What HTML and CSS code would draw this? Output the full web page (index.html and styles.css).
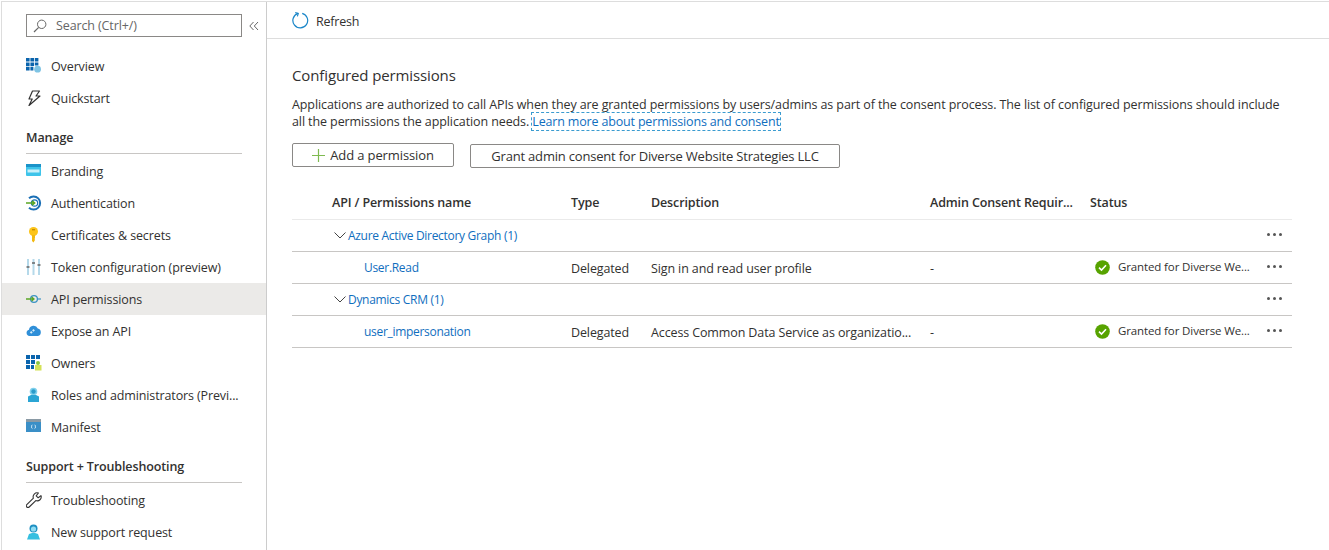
FILE: index.html
```html
<!DOCTYPE html>
<html lang="en">
<head>
  <meta charset="UTF-8" />
  <title>API permissions</title>
  <link rel="stylesheet" href="styles.css">
</head>
<body>
  <div class="app">
    <aside class="sidebar">
      <div class="search-row">
        <div class="search-box">
          <svg class="search-icon" width="14" height="14" viewBox="0 0 14 14"><circle cx="8.7" cy="5.3" r="4.2" fill="none" stroke="#666" stroke-width="1"/><path d="M5.7 8.3 L1 13" stroke="#666" stroke-width="1.2"/></svg>
          <span>Search (Ctrl+/)</span>
        </div>
        <svg class="collapse-icon" width="10" height="10" viewBox="0 0 10 10"><path d="M4.5 1 L0.8 5 L4.5 9 M9 1 L5.3 5 L9 9" fill="none" stroke="#666" stroke-width="1"/></svg>
      </div>

      <a class="nav-item first">
        <svg width="16" height="16" viewBox="0 0 16 16"><path d="M0 0h3.6v3.6H0zM4.4 0h3.6v3.6H4.4zM8.8 0h3.6v3.6H8.8zM0 4.4h3.6v3.6H0zM4.4 4.4h3.6v3.6H4.4zM8.8 4.4h3.6v3H8.8zM0 8.8h3.6v3.6H0zM4.4 8.8h3v3.6h-3z" fill="#0a64ad"/><circle cx="11.6" cy="11.2" r="3.4" fill="#7fc4e4"/></svg>
        <span>Overview</span>
      </a>
      <a class="nav-item">
        <svg width="16" height="16" viewBox="0 0 16 16"><path d="M6.5 1 H13.5 L10 6 H14 L3 15.5 L6.2 9 H3 Z" fill="none" stroke="#333" stroke-width="1.2" stroke-linejoin="round"/></svg>
        <span>Quickstart</span>
      </a>

      <div class="nav-heading manage">Manage</div>
      <a class="nav-item">
        <svg width="16" height="16" viewBox="0 0 16 16"><rect x="0" y="1" width="15" height="12" rx="1" fill="#3ec4ea"/><rect x="0" y="1" width="15" height="3" fill="#1b93c9"/><rect x="1.5" y="6.5" width="12" height="3" fill="#c8f0fa"/></svg>
        <span>Branding</span>
      </a>
      <a class="nav-item">
        <svg width="16" height="16" viewBox="0 0 16 16"><path d="M3 3.2 A6.6 6.6 0 1 1 3 12.8" fill="none" stroke="#1a6fb5" stroke-width="2"/><circle cx="8.5" cy="8" r="3.2" fill="none" stroke="#1a6fb5" stroke-width="1.2"/><path d="M0 8 H8 M6 5.8 L8.6 8 L6 10.2" fill="none" stroke="#5aa625" stroke-width="1.6"/></svg>
        <span>Authentication</span>
      </a>
      <a class="nav-item">
        <svg width="16" height="16" viewBox="0 0 16 16"><circle cx="7.5" cy="4.5" r="4.5" fill="#fcc419"/><path d="M6 8 H9 V11 L8.6 12 L9 13 L7.5 15.5 L6 14 Z" fill="#f2b90f"/><rect x="6" y="2" width="3" height="1.4" fill="#c98f00"/></svg>
        <span>Certificates &amp; secrets</span>
      </a>
      <a class="nav-item">
        <svg width="16" height="16" viewBox="0 0 16 16"><path d="M2 0v16M7.5 0v16M13 0v16" stroke="#b5d9ea" stroke-width="2"/><path d="M0.5 8h3M6 4h3M11.5 6h3" stroke="#666" stroke-width="1.4"/></svg>
        <span>Token configuration (preview)</span>
      </a>
      <a class="nav-item active">
        <svg width="16" height="16" viewBox="0 0 16 16"><circle cx="8" cy="8" r="3.4" fill="none" stroke="#3a93c4" stroke-width="1.3"/><path d="M11.4 8 H15" stroke="#3a93c4" stroke-width="1.2"/><path d="M0 8 H7.5 M5.6 6 L8 8 L5.6 10" fill="none" stroke="#5aa625" stroke-width="1.3"/></svg>
        <span>API permissions</span>
      </a>
      <a class="nav-item">
        <svg width="16" height="16" viewBox="0 0 16 16"><path d="M3.5 13 A3.2 3.2 0 0 1 3 6.7 A4.6 4.6 0 0 1 11.8 5.6 A3.8 3.8 0 0 1 12 13 Z" fill="#2f8fd8"/><path d="M4.5 10 L9 6" stroke="#d5ecf9" stroke-width="2" stroke-dasharray="2 1"/></svg>
        <span>Expose an API</span>
      </a>
      <a class="nav-item">
        <svg width="16" height="16" viewBox="0 0 16 16"><path d="M0 0h4v4H0zM5 0h4v4H5zM10 0h4v4h-4zM0 5h4v4H0zM5 5h4v4H5zM0 10h4v4H0zM5 10h3v4H5z" fill="#0a64ad"/><circle cx="12" cy="8" r="2" fill="#8cc63f"/><rect x="9" y="10" width="6.5" height="5.5" fill="#d4e157"/></svg>
        <span>Owners</span>
      </a>
      <a class="nav-item">
        <svg width="16" height="16" viewBox="0 0 16 16"><circle cx="7.5" cy="4.5" r="3.8" fill="#7fd0ec"/><circle cx="7.5" cy="4.5" r="2.2" fill="#2b9ccb"/><path d="M2 15 V9.5 L5 8 H10 L13 9.5 V15 Z" fill="#2ba5d4"/></svg>
        <span>Roles and administrators (Previ...</span>
      </a>
      <a class="nav-item">
        <svg width="16" height="16" viewBox="0 0 16 16"><rect x="0" y="0" width="15" height="13" fill="#3a8fc7"/><rect x="0" y="0" width="15" height="3" fill="#8a9aa5"/><path d="M6.5 6 L5.6 6.4 V9 L6.5 9.6 M8.5 6 L9.4 6.4 V9 L8.5 9.6" fill="none" stroke="#e4f2fa" stroke-width=".8"/></svg>
        <span>Manifest</span>
      </a>

      <div class="nav-heading support">Support + Troubleshooting</div>
      <a class="nav-item">
        <svg width="16" height="16" viewBox="0 0 16 16"><path d="M15 3.6 L12.2 5.8 L10.2 3.9 L12.4 1 A4 4 0 0 0 7.4 6.2 L0.8 12.6 A1.6 1.6 0 0 0 3.2 15 L9.8 8.6 A4 4 0 0 0 15 3.6 Z" fill="none" stroke="#333" stroke-width="1.1" stroke-linejoin="round"/></svg>
        <span>Troubleshooting</span>
      </a>
      <a class="nav-item">
        <svg width="16" height="16" viewBox="0 0 16 16"><circle cx="7.5" cy="4.5" r="4" fill="#1e8fc2"/><circle cx="7.5" cy="5" r="2.6" fill="#8fdcf2"/><path d="M1 15.5 L3 10 L6 9 H9 L12 10 L14 15.5 Z" fill="#35bfe0"/></svg>
        <span>New support request</span>
      </a>
    </aside>

    <main class="content">
      <div class="toolbar">
        <svg width="17" height="17" viewBox="0 0 17 17"><path d="M6 1.4 A7.4 7.4 0 1 0 10.2 1.3" fill="none" stroke="#1a86c8" stroke-width="1.2"/><path d="M3.2 0.6 L6.3 1.3 L5.4 4.3" fill="none" stroke="#1a86c8" stroke-width="1.1"/></svg>
        <span class="toolbar-label">Refresh</span>
      </div>

      <section class="panel">
        <h2 class="panel-title">Configured permissions</h2>
        <p class="panel-text">Applications are authorized to call APIs when they are granted permissions by users/admins as part of the consent process. The list of configured permissions should include all the permissions the application needs. <a class="learn-link">Learn more about permissions and consent</a></p>

        <div class="actions">
          <button class="btn btn-add">
            <svg width="13" height="13" viewBox="0 0 13 13"><path d="M6.5 0v13M0 6.5h13" stroke="#7fba50" stroke-width="1.2"/></svg>
            Add a permission
          </button>
          <button class="btn btn-grant">Grant admin consent for Diverse Website Strategies LLC</button>
        </div>

        <div class="perm-table">
          <div class="perm-row perm-head">
            <div class="col-name">API / Permissions name</div>
            <div>Type</div>
            <div>Description</div>
            <div>Admin Consent Requir...</div>
            <div>Status</div>
          </div>

          <div class="perm-row">
            <div class="col-group">
              <svg width="12" height="7" viewBox="0 0 12 7"><path d="M.5 .5 L6 6 L11.5 .5" fill="none" stroke="#444" stroke-width="1"/></svg>
              <a class="link">Azure Active Directory Graph (1)</a>
            </div>
            <div></div><div></div><div></div><div></div>
            <div class="dots"><i></i><i></i><i></i></div>
          </div>

          <div class="perm-row perm-child">
            <div class="col-perm"><a class="link">User.Read</a></div>
            <div>Delegated</div>
            <div>Sign in and read user profile</div>
            <div>-</div>
            <div class="status">
              <svg width="15" height="15" viewBox="0 0 15 15"><circle cx="7.5" cy="7.5" r="7.3" fill="#57a300"/><path d="M4 7.6 L6.5 10 L11 5.2" fill="none" stroke="#fff" stroke-width="1.6"/></svg>
              <span>Granted for Diverse We...</span>
            </div>
            <div class="dots"><i></i><i></i><i></i></div>
          </div>

          <div class="perm-row">
            <div class="col-group">
              <svg width="12" height="7" viewBox="0 0 12 7"><path d="M.5 .5 L6 6 L11.5 .5" fill="none" stroke="#444" stroke-width="1"/></svg>
              <a class="link">Dynamics CRM (1)</a>
            </div>
            <div></div><div></div><div></div><div></div>
            <div class="dots"><i></i><i></i><i></i></div>
          </div>

          <div class="perm-row perm-child">
            <div class="col-perm"><a class="link">user_impersonation</a></div>
            <div>Delegated</div>
            <div>Access Common Data Service as organizatio...</div>
            <div>-</div>
            <div class="status">
              <svg width="15" height="15" viewBox="0 0 15 15"><circle cx="7.5" cy="7.5" r="7.3" fill="#57a300"/><path d="M4 7.6 L6.5 10 L11 5.2" fill="none" stroke="#fff" stroke-width="1.6"/></svg>
              <span>Granted for Diverse We...</span>
            </div>
            <div class="dots"><i></i><i></i><i></i></div>
          </div>
        </div>
      </section>
    </main>
  </div>
</body>
</html>
```

FILE: styles.css
```css
html, body {
  margin: 0;
  padding: 0;
  height: 100%;
  overflow: hidden;
}

body {
  font-family: 'Open Sans', 'Noto Sans', sans-serif;
  font-size: 12.5px;
  letter-spacing: -0.12px;
  color: #323130;
  background: #fff;
}

.app {
  display: flex;
  height: 550px;
  margin-top: 1px;
  border-top: 1px solid #ddd;
  margin-left: 1px;
  border-left: 1px solid #ddd;
  box-sizing: border-box;
}

/* sidebar */
.sidebar {
  width: 264px;
  flex: none;
  border-right: 1px solid #ccc;
  box-sizing: content-box;
}

.search-row {
  display: flex;
  align-items: center;
  padding: 12px 0 0 24px;
}

.search-box {
  display: flex;
  align-items: center;
  gap: 9px;
  width: 216px;
  height: 23px;
  box-sizing: border-box;
  padding-left: 6px;
  border: 1px solid #8a8886;
  color: #666;
}

.collapse-icon {
  margin-left: 7px;
}

.nav-item {
  display: flex;
  align-items: center;
  gap: 9px;
  height: 32px;
  padding-left: 24px;
}

.nav-item svg {
  flex: none;
  width: 16px;
  height: 16px;
}

.nav-item.first {
  margin-top: 13px;
}

.nav-item.active {
  background: #ebeae8;
}

.nav-heading {
  margin: 0 24px 1px 24px;
  border-bottom: 1px solid #c8c6c4;
  font-weight: 600;
  box-sizing: border-box;
}

.nav-heading.manage {
  margin-top: 0;
  padding-top: 15px;
  padding-bottom: 7px;
}

.nav-heading.support {
  padding-top: 15px;
  padding-bottom: 7px;
}

/* main area */
.content {
  flex: 1;
  min-width: 0;
}

.toolbar {
  display: flex;
  align-items: center;
  gap: 7px;
  height: 35px;
  padding: 1px 0 0 25px;
  border-bottom: 1px solid #ddd;
}

.toolbar-label {
  margin-top: 2px;
  letter-spacing: -0.2px;
}

.panel {
  padding: 0 37px 0 25px;
}

.panel-title {
  margin: 26px 0 0;
  font-size: 15px;
  font-weight: 400;
  line-height: 20px;
}

.panel-text {
  margin: 11px 0 0;
  line-height: 17px;
  letter-spacing: -0.1px;
}

.learn-link {
  color: #106ebe;
  letter-spacing: -0.17px;
  outline: 1px dashed #3a9bd0;
}

.actions {
  display: flex;
  align-items: flex-start;
  gap: 16px;
  margin-top: 13px;
}

.btn {
  height: 24px;
  padding: 0;
  background: #fff;
  border: 1px solid #8a8886;
  border-radius: 2px;
  font: inherit;
  font-size: 13px;
  letter-spacing: inherit;
  color: #323130;
}

.btn-add {
  display: flex;
  align-items: center;
  justify-content: center;
  gap: 5px;
  width: 162px;
}

.btn-grant {
  width: 370px;
  margin-top: 1px;
  letter-spacing: -0.2px;
}

.perm-table {
  margin-top: 17px;
  width: 1000px;
}

.perm-row {
  display: grid;
  grid-template-columns: 279px 80px 279px 160px 1fr;
  position: relative;
  align-items: center;
  height: 32px;
  border-bottom: 1px solid #c8c6c4;
  box-sizing: border-box;
}

.perm-head {
  height: 35px;
  font-weight: 600;
  border-bottom-color: #eaeaea;
}

.perm-child > div {
  padding-top: 2px;
}

.col-name {
  padding-left: 40px;
}

.col-group {
  display: flex;
  align-items: center;
  gap: 2px;
  padding-left: 42px;
}

.perm-child > .col-perm {
  padding: 0 0 0 72px;
}

.link {
  font-size: 12px;
  letter-spacing: -0.3px;
  color: #106ebe;
}

.perm-child > .status {
  display: flex;
  align-items: center;
  gap: 8px;
  padding: 0 0 0 5px;
  font-size: 11.5px;
}

.status span {
  margin-bottom: 2px;
}

.perm-child > .dots,
.dots {
  position: absolute;
  top: 13px;
  right: 10px;
  display: flex;
  gap: 3px;
  padding: 0;
}

.dots i {
  width: 3px;
  height: 3px;
  border-radius: 50%;
  background: #555;
}
```
